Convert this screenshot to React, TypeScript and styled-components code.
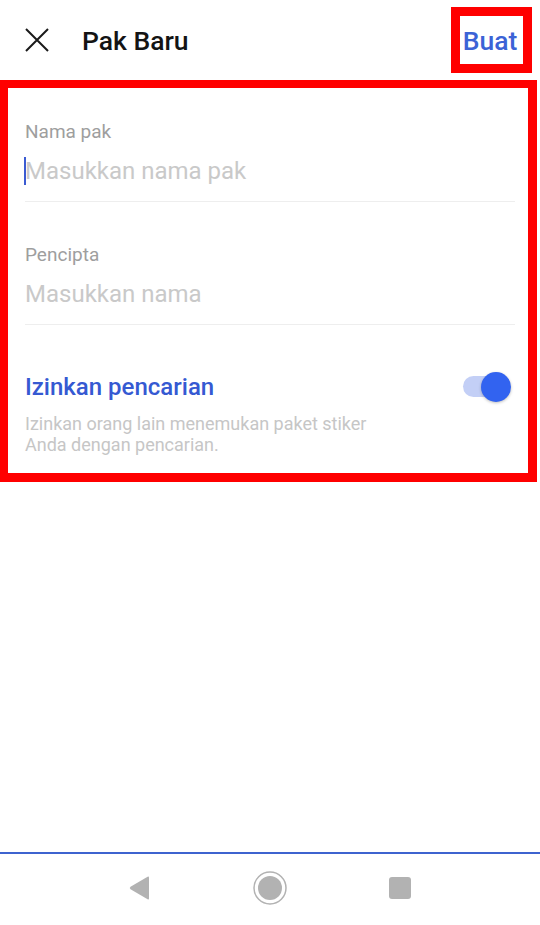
import React from "react";
import styled, { createGlobalStyle } from "styled-components";

const Global = createGlobalStyle`
  html, body { margin: 0; padding: 0; background: #ffffff; }
  body { font-family: Roboto, "Noto Sans", "Liberation Sans", sans-serif; }
  * { box-sizing: border-box; }
`;

const Page = styled.div`
  width: 540px;
  height: 925px;
  display: flex;
  flex-direction: column;
  background: #fff;
`;

const Header = styled.header`
  height: 80px;
  display: flex;
  align-items: center;
  padding: 0 8px 0 25px;
`;

const CloseButton = styled.button`
  width: 24px;
  height: 24px;
  padding: 0;
  border: 0;
  background: none;
  display: flex;
  align-items: center;
  justify-content: center;
`;

const Title = styled.h1`
  margin: 0 0 0 33px;
  font-size: 26.5px;
  font-weight: 500;
  color: #141414;
  flex: 1;
`;

const CreateBox = styled.div`
  width: 81px;
  height: 66px;
  border: 9px solid #ff0000;
  display: flex;
  align-items: center;
  justify-content: center;
`;

const CreateText = styled.span`
  font-size: 26.5px;
  font-weight: 500;
  color: #3b63d6;
  margin-right: 3px;
`;

const FormBox = styled.section`
  width: 537px;
  border: 8px solid #ff0000;
  border-right-width: 9px;
  border-bottom-width: 9px;
  padding: 0 13px 18px 17px;
  display: flex;
  flex-direction: column;
`;

const Field = styled.div<{ $top: number }>`
  padding-top: ${(p) => p.$top}px;
  border-bottom: 1px solid #eeeeee;
  padding-bottom: 15px;
  display: flex;
  flex-direction: column;
`;

const Label = styled.div`
  font-size: 19px;
  line-height: 22px;
  color: #9e9e9e;
  margin-bottom: 13px;
`;

const InputRow = styled.div`
  position: relative;
  height: 30px;
  display: flex;
  align-items: center;
`;

const Placeholder = styled.span`
  font-size: 24px;
  line-height: 30px;
  color: #c9c9c9;
`;

const Caret = styled.span`
  position: absolute;
  left: -1px;
  top: 1px;
  width: 2px;
  height: 28px;
  background: #3b5bd2;
`;

const ToggleSection = styled.div`
  padding-top: 47px;
  display: flex;
  flex-direction: column;
`;

const ToggleRow = styled.div`
  display: flex;
  align-items: center;
  justify-content: space-between;
  height: 30px;
`;

const ToggleTitle = styled.span`
  font-size: 24px;
  line-height: 30px;
  font-weight: 500;
  color: #3559d2;
`;

const Switch = styled.div`
  position: relative;
  width: 48px;
  height: 30px;
  margin-right: 4px;
`;

const Track = styled.div`
  position: absolute;
  left: 0;
  top: 4px;
  width: 42px;
  height: 21px;
  border-radius: 11px;
  background: #c3cff6;
`;

const Knob = styled.div`
  position: absolute;
  right: 0;
  top: 0;
  width: 30px;
  height: 30px;
  border-radius: 50%;
  background: #3263f0;
  box-shadow: 0 1px 3px rgba(0, 0, 0, 0.25);
`;

const Description = styled.p`
  margin: 11px 0 0;
  font-size: 18px;
  line-height: 21px;
  color: #c6c6c6;
`;

const Spacer = styled.div`
  flex: 1;
`;

const NavBar = styled.nav`
  height: 73px;
  border-top: 2px solid #3d63cf;
  display: flex;
  align-items: center;
  justify-content: center;
  padding-bottom: 4px;
`;

const NavSlot = styled.div`
  width: 130px;
  display: flex;
  justify-content: center;
`;

export default function App() {
  return (
    <Page>
      <Global />
      <Header>
        <CloseButton aria-label="Tutup">
          <svg width="24" height="24" viewBox="0 0 24 24">
            <path d="M1 1 L23 23 M23 1 L1 23" stroke="#1a1a1a" strokeWidth="2" fill="none" />
          </svg>
        </CloseButton>
        <Title>Pak Baru</Title>
        <CreateBox>
          <CreateText>Buat</CreateText>
        </CreateBox>
      </Header>
      <FormBox>
        <Field $top={33}>
          <Label>Nama pak</Label>
          <InputRow>
            <Caret />
            <Placeholder>Masukkan nama pak</Placeholder>
          </InputRow>
        </Field>
        <Field $top={42}>
          <Label>Pencipta</Label>
          <InputRow>
            <Placeholder>Masukkan nama</Placeholder>
          </InputRow>
        </Field>
        <ToggleSection>
          <ToggleRow>
            <ToggleTitle>Izinkan pencarian</ToggleTitle>
            <Switch>
              <Track />
              <Knob />
            </Switch>
          </ToggleRow>
          <Description>
            Izinkan orang lain menemukan paket stiker
            <br />
            Anda dengan pencarian.
          </Description>
        </ToggleSection>
      </FormBox>
      <Spacer />
      <NavBar>
        <NavSlot>
          <svg width="24" height="26" viewBox="0 0 24 26">
            <path
              d="M21 2.5 L21 23.5 Q21 25 19.6 24.3 L2.5 14.2 Q1 13 2.5 11.8 L19.6 1.7 Q21 1 21 2.5 Z"
              fill="#b2b2b2"
            />
          </svg>
        </NavSlot>
        <NavSlot>
          <svg width="36" height="36" viewBox="0 0 36 36">
            <circle cx="18" cy="18" r="16" stroke="#b2b2b2" strokeWidth="1.5" fill="none" />
            <circle cx="18" cy="18" r="12" fill="#b2b2b2" />
          </svg>
        </NavSlot>
        <NavSlot>
          <svg width="24" height="24" viewBox="0 0 24 24">
            <rect x="1" y="1" width="22" height="22" rx="3" fill="#b2b2b2" />
          </svg>
        </NavSlot>
      </NavBar>
    </Page>
  );
}
